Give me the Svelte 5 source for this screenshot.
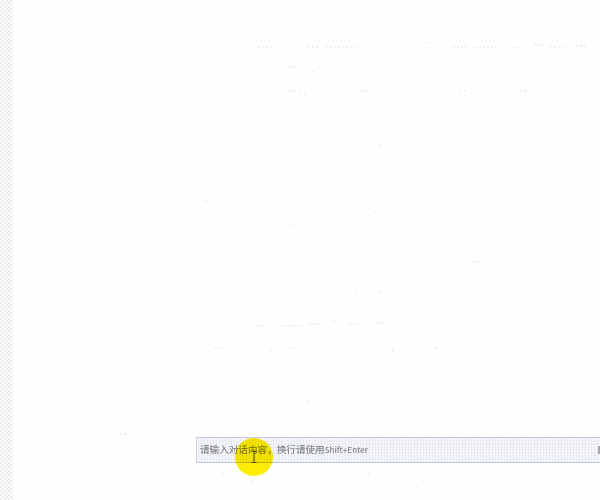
<script>
	// stray compression specks left on the blank chat area: [x, y, width]
	const specks = [
		[258, 46, 16], [308, 46, 12], [326, 46, 30], [423, 42, 6], [453, 46, 14], [475, 46, 22],
		[515, 46, 6], [534, 44, 10], [550, 46, 16], [576, 45, 12], [290, 66, 6], [308, 71, 6],
		[289, 90, 6], [300, 93, 8], [362, 90, 6], [460, 90, 6], [520, 90, 6], [380, 144, 4],
		[205, 200, 4], [207, 212, 4], [375, 211, 4], [290, 224, 3], [453, 266, 4], [473, 261, 6],
		[355, 292, 3], [380, 291, 3], [258, 325, 8], [283, 325, 18], [310, 323, 10], [333, 320, 4],
		[350, 323, 6], [378, 322, 8], [215, 347, 6], [270, 349, 4], [290, 347, 4], [392, 350, 3],
		[435, 347, 3], [308, 400, 3], [120, 433, 5], [222, 473, 2], [252, 480, 2], [368, 473, 2],
		[423, 480, 4]
	];
</script>

<div class="page">
	<div class="rail"></div>
	<div class="main">
		<div class="composer">
			<span class="hint">请输入对话内容，换行请使用<span class="latin">Shift+Enter</span></span>
			<span class="edge"></span>
		</div>
	</div>

	<svg class="specks" width="600" height="500" viewBox="0 0 600 500" aria-hidden="true">
		{#each specks as [x, y, w]}
			{#each Array(Math.ceil(w / 4)) as _, i}
				<rect x={x + i * 4} y={y} width="1.5" height="1.5" fill="#cfcfcf" opacity="0.5" />
			{/each}
		{/each}
	</svg>

	<div class="pointer">
		<svg width="10" height="14" viewBox="0 0 10 14" aria-hidden="true">
			<path d="M2.5 1.5h5M5 1.5v11M2.5 12.5h5" fill="none" stroke="#6d6a1c" stroke-width="1.2" />
		</svg>
	</div>
</div>

<style>
	:global(body) {
		margin: 0;
		background: #fff;
	}
	.page {
		position: relative;
		display: flex;
		width: 600px;
		height: 500px;
		overflow: hidden;
		background: #fefefe;
		font-family: "Noto Sans CJK SC", "Liberation Sans", sans-serif;
	}
	.rail {
		flex: none;
		width: 13px;
		background: repeating-conic-gradient(#e2e2e2 0 25%, #fff 0 50%) 0 0 / 4px 4px;
		opacity: 0.75;
	}
	.main {
		flex: 1;
		display: flex;
		flex-direction: column;
		justify-content: flex-end;
		padding: 0 0 37px 183px;
	}
	.composer {
		display: flex;
		align-items: center;
		justify-content: space-between;
		height: 26px;
		padding-left: 3px;
		box-sizing: border-box;
		border-top: 1px solid #c9cce6;
		border-bottom: 1px solid #c3c7e2;
		border-left: 1px solid #cfd2e8;
		background: repeating-conic-gradient(#e6e8f2 0 25%, #fbfbfe 0 50%) 0 0 / 3px 3px;
	}
	.hint {
		font-size: 9.6px;
		line-height: 1;
		font-weight: 500;
		color: #85878d;
		white-space: nowrap;
		filter: blur(0.65px);
	}
	.latin {
		font-size: 8px;
	}
	.edge {
		width: 2px;
		height: 8px;
		background: #a8a8a8;
	}
	.specks {
		position: absolute;
		inset: 0;
		pointer-events: none;
	}
	.pointer {
		position: absolute;
		left: 235px;
		top: 438px;
		width: 38px;
		height: 38px;
		display: flex;
		align-items: center;
		justify-content: center;
		border-radius: 50%;
		background: #ffee00;
		mix-blend-mode: multiply;
	}
</style>
